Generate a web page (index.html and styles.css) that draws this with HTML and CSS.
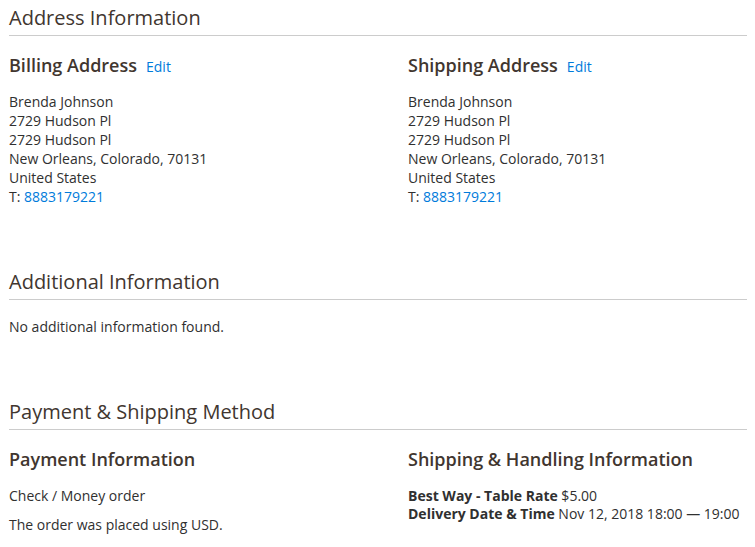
FILE: index.html
```html
<!DOCTYPE html>
<html lang="en">
<head>
<meta charset="utf-8">
<title>Order</title>
<link rel="stylesheet" href="styles.css">
</head>
<body>
<div class="page">
  <section class="section">
    <div class="section-title">Address Information</div>
    <div class="cols">
      <div class="col">
        <div class="item-title"><span class="item-heading">Billing Address</span><a class="edit" href="#">Edit</a></div>
        <address class="addr">Brenda Johnson<br>2729 Hudson Pl<br>2729 Hudson Pl<br>New Orleans, Colorado, 70131<br>United States<br>T: <a href="#">8883179221</a></address>
      </div>
      <div class="col">
        <div class="item-title"><span class="item-heading">Shipping Address</span><a class="edit" href="#">Edit</a></div>
        <address class="addr">Brenda Johnson<br>2729 Hudson Pl<br>2729 Hudson Pl<br>New Orleans, Colorado, 70131<br>United States<br>T: <a href="#">8883179221</a></address>
      </div>
    </div>
  </section>

  <section class="section">
    <div class="section-title">Additional Information</div>
    <div class="content-sm">No additional information found.</div>
  </section>

  <section class="section">
    <div class="section-title">Payment &amp; Shipping Method</div>
    <div class="cols">
      <div class="col">
        <div class="item-title"><span class="item-heading">Payment Information</span></div>
        <div class="text">Check / Money order</div>
        <div class="text note">The order was placed using USD.</div>
      </div>
      <div class="col">
        <div class="item-title"><span class="item-heading">Shipping &amp; Handling Information</span></div>
        <div class="ship"><strong>Best Way - Table Rate</strong> $5.00</div>
        <div class="ship"><strong>Delivery Date &amp; Time</strong> Nov 12, 2018 18:00 — 19:00</div>
      </div>
    </div>
  </section>
</div>
</body>
</html>
```

FILE: styles.css
```css
html, body {
  margin: 0;
  padding: 0;
  background: #ffffff;
}
body {
  font-family: "Open Sans", "Liberation Sans", sans-serif;
  font-size: 14px;
  color: #303030;
}
a {
  color: #007bdb;
  text-decoration: none;
}
.page {
  width: 738px;
  padding-left: 9px;
}
.section + .section {
  margin-top: 58px;
}
.section-title {
  font-size: 20px;
  line-height: 24px;
  font-weight: 400;
  color: #41362f;
  padding: 6px 0 5px;
  border-bottom: 1px solid #cccccc;
}
.cols {
  display: grid;
  grid-template-columns: 1fr 1fr;
  column-gap: 60px;
}
.item-title {
  margin-top: 18px;
  line-height: 22px;
}
.item-heading {
  font-size: 18px;
  font-weight: 600;
  color: #41362f;
}
.edit {
  font-size: 14px;
  margin-left: 9px;
}
.addr {
  font-style: normal;
  line-height: 19px;
  margin-top: 14px;
}
.content-sm {
  margin-top: 17px;
  line-height: 19px;
}
.text {
  line-height: 19px;
  margin-top: 14px;
}
.text.note {
  margin-top: 10px;
}
.ship {
  line-height: 18px;
}
.item-title + .ship {
  margin-top: 15px;
}
.ship strong {
  font-weight: 700;
}
```
